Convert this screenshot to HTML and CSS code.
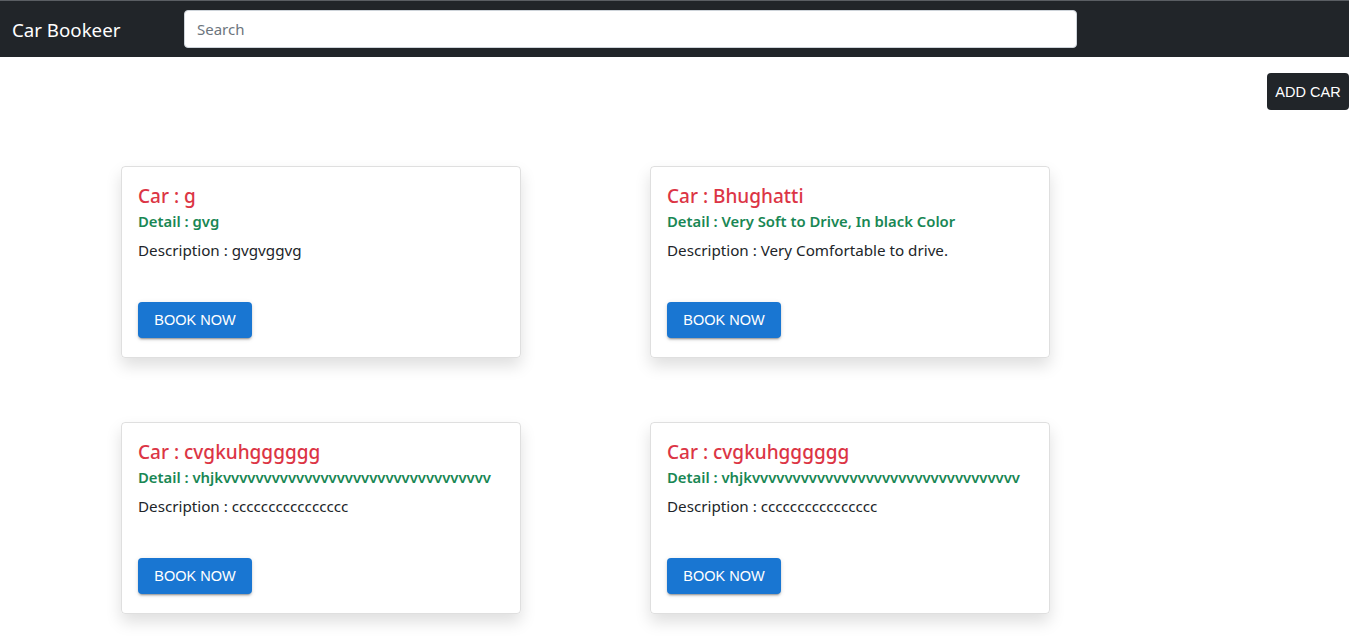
FILE: index.html
```html
<!DOCTYPE html>
<html>
<head>
<meta charset="utf-8">
<title>Car Bookeer</title>
<link rel="stylesheet" href="styles.css">
</head>
<body>
<nav class="navbar">
  <span class="brand">Car Bookeer</span>
  <input class="search" type="text" placeholder="Search">
</nav>
<div class="toolbar">
  <button class="add-btn">ADD CAR</button>
</div>
<main class="grid">
  <div class="card">
    <div class="card-title">Car : g</div>
    <div class="card-detail">Detail : gvg</div>
    <p class="card-desc">Description : gvgvggvg</p>
    <button class="book-btn">BOOK NOW</button>
  </div>
  <div class="card">
    <div class="card-title">Car : Bhughatti</div>
    <div class="card-detail">Detail : Very Soft to Drive, In black Color</div>
    <p class="card-desc">Description : Very Comfortable to drive.</p>
    <button class="book-btn">BOOK NOW</button>
  </div>
  <div class="card">
    <div class="card-title">Car : cvgkuhgggggg</div>
    <div class="card-detail">Detail : vhjkvvvvvvvvvvvvvvvvvvvvvvvvvvvvvvvvv</div>
    <p class="card-desc">Description : cccccccccccccccc</p>
    <button class="book-btn">BOOK NOW</button>
  </div>
  <div class="card">
    <div class="card-title">Car : cvgkuhgggggg</div>
    <div class="card-detail">Detail : vhjkvvvvvvvvvvvvvvvvvvvvvvvvvvvvvvvvv</div>
    <p class="card-desc">Description : cccccccccccccccc</p>
    <button class="book-btn">BOOK NOW</button>
  </div>
</main>
</body>
</html>
```
FILE: styles.css
```css
* { box-sizing: border-box; }
body {
  margin: 0;
  font-family: "Noto Sans", "Open Sans", sans-serif;
  color: #212529;
  background: #fff;
}
.navbar {
  display: flex;
  align-items: center;
  height: 57px;
  background: #212529;
  border-top: 1px solid #5a5e63;
  padding: 0 12px;
}
.brand {
  color: #fff;
  font-size: 18.7px;
  width: 172px;
}
.search {
  width: 893px;
  height: 38px;
  border: 1px solid #ced4da;
  border-radius: 4px;
  padding: 6px 12px;
  font-family: inherit;
  font-size: 15px;
  color: #212529;
  background: #fff;
  outline: none;
}
.search::placeholder { color: #6c757d; }
.toolbar {
  display: flex;
  justify-content: flex-end;
  padding-top: 16px;
}
.add-btn {
  background: #212529;
  color: #fff;
  border: none;
  border-radius: 4px;
  height: 37px;
  width: 82px;
  font-family: "Liberation Sans", Arial, sans-serif;
  font-size: 14.5px;
  padding: 0;
  cursor: pointer;
}
.grid {
  display: grid;
  grid-template-columns: 400px 400px;
  column-gap: 129px;
  row-gap: 64px;
  padding: 56px 0 40px 121px;
}
.card {
  border: 1px solid rgba(0,0,0,.125);
  border-radius: 4px;
  box-shadow: 0 .5rem 1rem rgba(0,0,0,.13);
  padding: 16px 16px 19px;
  height: 192px;
  display: flex;
  flex-direction: column;
  align-items: flex-start;
}
.card-title {
  color: #dc3545;
  font-size: 19px;
  font-weight: 500;
  line-height: 24px;
  margin-top: 1px;
}
.card-detail {
  color: #198754;
  font-size: 14.85px;
  font-weight: 600;
  line-height: 20px;
  margin-top: 3px;
}
.card-desc {
  margin: 8px 0 0;
  font-size: 15.2px;
  line-height: 22px;
}
.book-btn {
  margin-top: auto;
  background: #1976d2;
  color: #fff;
  border: none;
  border-radius: 4px;
  height: 36px;
  width: 114px;
  font-family: "Liberation Sans", Arial, sans-serif;
  font-size: 14.5px;
  padding: 0;
  box-shadow: 0 3px 1px -2px rgba(0,0,0,.2), 0 2px 2px 0 rgba(0,0,0,.14), 0 1px 5px 0 rgba(0,0,0,.12);
  cursor: pointer;
}
```
